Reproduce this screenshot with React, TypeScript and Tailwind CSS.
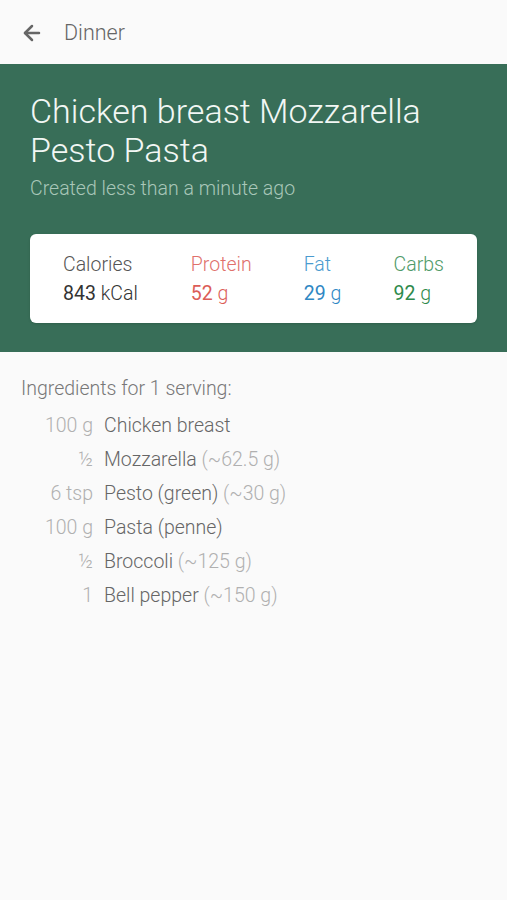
import { ArrowLeft } from 'lucide-react';

const macros = [
  { label: 'Calories', value: '843', unit: 'kCal', labelColor: 'text-[#555555]', valueColor: 'text-[#333333]', width: 'w-[128px]' },
  { label: 'Protein', value: '52', unit: 'g', labelColor: 'text-[#e0706b]', valueColor: 'text-[#dc5d58]', width: 'w-[113px]' },
  { label: 'Fat', value: '29', unit: 'g', labelColor: 'text-[#4a9bcf]', valueColor: 'text-[#2f88c4]', width: 'w-[90px]' },
  { label: 'Carbs', value: '92', unit: 'g', labelColor: 'text-[#4f9a68]', valueColor: 'text-[#2f8a4c]', width: 'w-auto' },
];

const ingredients = [
  { amount: '100 g', name: 'Chicken breast', note: '' },
  { amount: '½', name: 'Mozzarella', note: '(~62.5 g)' },
  { amount: '6 tsp', name: 'Pesto (green)', note: '(~30 g)' },
  { amount: '100 g', name: 'Pasta (penne)', note: '' },
  { amount: '½', name: 'Broccoli', note: '(~125 g)' },
  { amount: '1', name: 'Bell pepper', note: '(~150 g)' },
];

export default function App() {
  return (
    <div className="min-h-[900px] bg-[#fafafa] font-['Roboto',sans-serif]">
      {/* Top bar */}
      <div className="flex h-16 items-center pl-[20px] pt-[2px]">
        <ArrowLeft className="h-6 w-6 text-[#666666]" strokeWidth={2.5} />
        <span className="ml-[20px] text-[21.5px] font-light text-[#666666]">Dinner</span>
      </div>

      {/* Recipe header */}
      <div className="bg-[#386e58] px-[30px] pt-[28px] pb-[29px]">
        <h1 className="text-[34px] font-light leading-[39px] text-[#f2f7f4]">
          Chicken breast Mozzarella Pesto Pasta
        </h1>
        <p className="mt-[4px] text-[19.5px] leading-[29px] font-light text-[#a9c7b9]">Created less than a minute ago</p>

        <div className="mt-[31px] flex rounded-[6px] bg-white px-[33px] pt-[16px] pb-[15px] shadow-sm">
          {macros.map((m) => (
            <div key={m.label} className={`${m.width} flex flex-col`}>
              <span className={`text-[19.5px] font-light leading-[29px] ${m.labelColor}`}>{m.label}</span>
              <span className={`text-[19.5px] leading-[29px] ${m.valueColor}`}>
                {m.value} <span className="font-light">{m.unit}</span>
              </span>
            </div>
          ))}
        </div>
      </div>

      {/* Ingredients */}
      <div className="px-[21px] pt-[22px]">
        <p className="text-[19.5px] leading-[29px] font-light text-[#777777]">Ingredients for 1 serving:</p>
        <div className="mt-[6px] flex flex-col">
          {ingredients.map((ing) => (
            <div key={ing.name} className="flex h-[34px] items-center text-[19.5px] font-light">
              <span className="w-[72px] text-right text-[#b0b0b0]">{ing.amount}</span>
              <span className="ml-[11px] text-[#666666]">
                {ing.name}
                {ing.note && <span className="text-[#b0b0b0]"> {ing.note}</span>}
              </span>
            </div>
          ))}
        </div>
      </div>
    </div>
  );
}
